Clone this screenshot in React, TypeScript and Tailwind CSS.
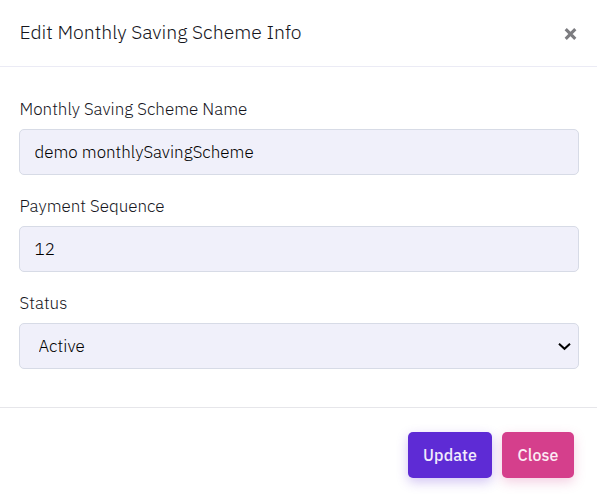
import { useState, type ReactNode } from "react";

const control =
  "block h-[46px] w-full appearance-none rounded-[5px] border border-[#d7dbe6] bg-[#f0f0fa] text-[17px] font-light text-black outline-none";

function Field({ label, id, children }: { label: string; id: string; children: ReactNode }) {
  return (
    <div className="flex flex-col">
      <label htmlFor={id} className="mb-[9px] h-[22px] pl-[0.5px] text-[17px] leading-[22px] font-light whitespace-nowrap text-[#15151c]">
        {label}
      </label>
      {children}
    </div>
  );
}

export default function App() {
  const [name, setName] = useState("demo monthlySavingScheme");
  const [sequence, setSequence] = useState("12");

  return (
    <div className="flex h-[500px] w-full flex-col overflow-hidden bg-white font-['IBM_Plex_Sans',Roboto,sans-serif]">
      <header className="flex h-[67px] items-start justify-between border-b border-[#ebebf5] pt-[18px] pr-5 pl-[19.5px]">
        <h5 className="text-[19.45px] leading-7 font-light whitespace-nowrap text-[#15151c]">Edit Monthly Saving Scheme Info</h5>
        <button type="button" aria-label="Dismiss" className="mt-[10px]">
          <svg width="13" height="13" viewBox="0 0 13 13" fill="none" stroke="#7c7c80" strokeWidth="3.1">
            <path d="M1.7 1.2 11.3 10.8M11.3 1.2 1.7 10.8" />
          </svg>
        </button>
      </header>

      <main className="flex h-[340px] flex-col gap-5 pt-[31px] pr-[18px] pl-[19px]">
        <Field label="Monthly Saving Scheme Name" id="name">
          <input id="name" className={`${control} px-[14.5px]`} value={name} onChange={(e) => setName(e.target.value)} />
        </Field>
        <Field label="Payment Sequence" id="sequence">
          <input id="sequence" className={`${control} px-[14.5px]`} value={sequence} onChange={(e) => setSequence(e.target.value)} />
        </Field>
        <Field label="Status" id="status">
          <div className="relative">
            <select id="status" className={`${control} pt-[2px] pr-10 pl-[18.5px]`} defaultValue="Active">
              <option>Active</option>
              <option>Inactive</option>
            </select>
            <svg className="pointer-events-none absolute top-[19px] right-[8px]" width="13" height="9" viewBox="0 0 13 9" fill="none" stroke="#000" strokeWidth="2">
              <path d="M1 1.8 6.5 6.8 12 1.8" />
            </svg>
          </div>
        </Field>
      </main>

      <footer className="flex flex-1 items-start justify-end gap-[10px] border-t border-[#e6e6ea] pt-6 pr-[23px]">
        <button type="button" className="h-[46px] w-[84px] rounded-[5px] bg-[#5e2bd5] text-[16px] font-medium tracking-[0.1px] text-[#f1ecfc] shadow-[0_4px_12px_rgba(94,43,213,0.28)]">
          Update
        </button>
        <button type="button" className="h-[46px] w-[72px] rounded-[5px] bg-[#d53f8c] text-[16px] font-medium tracking-[0.1px] text-[#fcebf4] shadow-[0_4px_12px_rgba(213,63,140,0.25)]">
          Close
        </button>
      </footer>
    </div>
  );
}
